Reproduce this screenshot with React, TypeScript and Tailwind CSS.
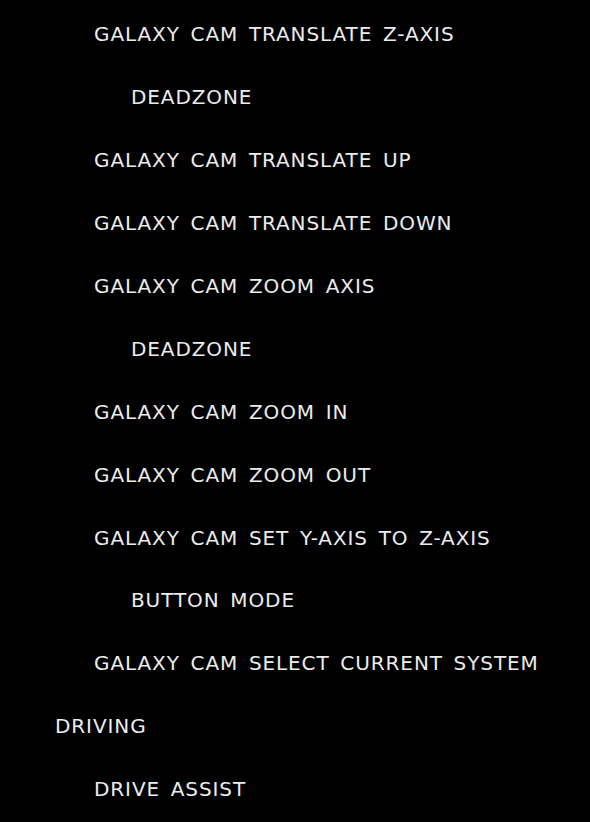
const rows: { label: string; level: 0 | 1 | 2 }[] = [
  { label: "GALAXY CAM TRANSLATE Z-AXIS", level: 1 },
  { label: "DEADZONE", level: 2 },
  { label: "GALAXY CAM TRANSLATE UP", level: 1 },
  { label: "GALAXY CAM TRANSLATE DOWN", level: 1 },
  { label: "GALAXY CAM ZOOM AXIS", level: 1 },
  { label: "DEADZONE", level: 2 },
  { label: "GALAXY CAM ZOOM IN", level: 1 },
  { label: "GALAXY CAM ZOOM OUT", level: 1 },
  { label: "GALAXY CAM SET Y-AXIS TO Z-AXIS", level: 1 },
  { label: "BUTTON MODE", level: 2 },
  { label: "GALAXY CAM SELECT CURRENT SYSTEM", level: 1 },
  { label: "DRIVING", level: 0 },
  { label: "DRIVE ASSIST", level: 1 },
];

const indent = ["pl-[55px]", "pl-[94px]", "pl-[131px]"];

export default function App() {
  return (
    <main className="h-[822px] w-full overflow-hidden bg-black pt-[3px] font-['DejaVu_Sans',sans-serif] text-[#ececec]">
      {rows.map((r, i) => (
        <div
          key={i}
          className={`flex h-[62.9px] items-center text-[20px] tracking-[0.9px] [word-spacing:3.5px] ${indent[r.level]}`}
        >
          {r.label}
        </div>
      ))}
    </main>
  );
}
